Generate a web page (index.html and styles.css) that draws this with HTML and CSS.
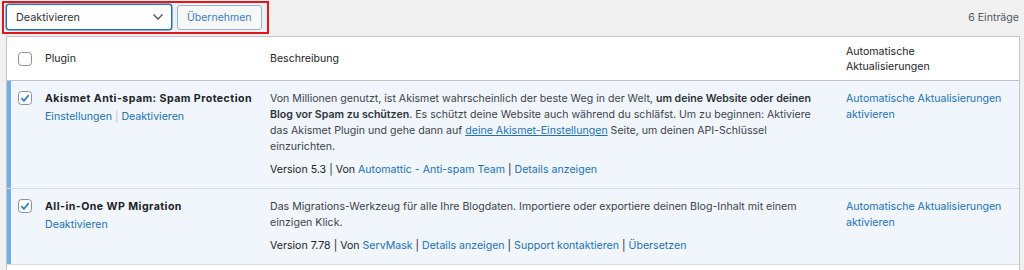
FILE: index.html
```html
<!DOCTYPE html>
<html lang="de">
<head>
    <meta charset="UTF-8">
    <title>Plugins</title>
    <link rel="stylesheet" href="styles.css">
</head>
<body>

    <div class="tablenav">
        <!-- Bulk actions, highlighted -->
        <div class="bulkactions">
            <span class="select-wrap">
                <select class="action-select">
                    <option>Deaktivieren</option>
                </select>
                <svg class="chevron" width="12" height="8" viewBox="0 0 12 8"><path d="M1.5 1.5l4.5 4.5 4.5-4.5" fill="none" stroke="#50575e" stroke-width="1.4"/></svg>
            </span>
            <button class="button" type="button">Übernehmen</button>
        </div>
        <div class="displaying-num">6 Einträge</div>
    </div>

    <table class="plugins">
        <colgroup>
            <col class="col-cb">
            <col class="col-name">
            <col class="col-desc">
            <col class="col-auto">
        </colgroup>
        <thead>
            <tr>
                <th class="check-column"><span class="cb"></span></th>
                <th>Plugin</th>
                <th>Beschreibung</th>
                <th>Automatische<br>Aktualisierungen</th>
            </tr>
        </thead>
        <tbody>
            <tr class="active">
                <th class="check-column"><span class="cb checked"><svg width="12" height="12" viewBox="0 0 12 12"><path d="M2.4 6.2l2.5 2.6 4.8-5.6" fill="none" stroke="#3582c4" stroke-width="1.8"/></svg></span></th>
                <td>
                    <strong class="plugin-title">Akismet Anti-spam: Spam Protection</strong>
                    <div class="row-actions"><a href="#">Einstellungen</a> <span class="sep">|</span> <a href="#">Deaktivieren</a></div>
                </td>
                <td>
                    <p class="plugin-description">Von Millionen genutzt, ist Akismet wahrscheinlich der beste Weg in der Welt, <strong>um deine Website oder deinen Blog vor Spam zu schützen</strong>. Es schützt deine Website auch während du schläfst. Um zu beginnen: Aktiviere das Akismet Plugin und gehe dann auf <a class="underline" href="#">deine Akismet-Einstellungen</a> Seite, um deinen API-Schlüssel einzurichten.</p>
                    <p class="version">Version 5.3 | Von <a href="#">Automattic - Anti-spam Team</a> | <a href="#">Details anzeigen</a></p>
                </td>
                <td><a href="#">Automatische Aktualisierungen aktivieren</a></td>
            </tr>
            <tr class="active">
                <th class="check-column"><span class="cb checked"><svg width="12" height="12" viewBox="0 0 12 12"><path d="M2.4 6.2l2.5 2.6 4.8-5.6" fill="none" stroke="#3582c4" stroke-width="1.8"/></svg></span></th>
                <td>
                    <strong class="plugin-title">All-in-One WP Migration</strong>
                    <div class="row-actions"><a href="#">Deaktivieren</a></div>
                </td>
                <td>
                    <p class="plugin-description">Das Migrations-Werkzeug für alle Ihre Blogdaten. Importiere oder exportiere deinen Blog-Inhalt mit einem einzigen Klick.</p>
                    <p class="version">Version 7.78 | Von <a href="#">ServMask</a> | <a href="#">Details anzeigen</a> | <a href="#">Support kontaktieren</a> | <a href="#">Übersetzen</a></p>
                </td>
                <td><a href="#">Automatische Aktualisierungen aktivieren</a></td>
            </tr>
            <tr class="inactive">
                <th class="check-column"><span class="cb"></span></th>
                <td></td>
                <td></td>
                <td></td>
            </tr>
        </tbody>
    </table>

</body>
</html>
```

FILE: styles.css
```css
body {
    margin: 0;
    padding: 1px 4px 0 2px;
    background-color: #f0f0f1;
    font-family: Inter, "Noto Sans", sans-serif;
    font-size: 10.6px;
    line-height: 16px;
    color: #3c434a;
}
a {
    color: #2271b1;
    text-decoration: none;
}
a.underline {
    text-decoration: underline;
}

/* Top bar */
.tablenav {
    display: flex;
    justify-content: space-between;
    align-items: center;
    margin-bottom: 2px;
}
.bulkactions {
    display: flex;
    align-items: center;
    gap: 5px;
    border: 2px solid #e3161c;
    padding: 1px 5px 2px 2px;
}
.select-wrap {
    position: relative;
    display: flex;
}
.action-select {
    appearance: none;
    -webkit-appearance: none;
    width: 166px;
    height: 26px;
    margin: 0;
    padding: 0 24px 0 9px;
    border: 1px solid #2271b1;
    border-radius: 3px;
    box-shadow: 0 0 0 0.5px #2271b1;
    background-color: #fff;
    font-family: inherit;
    font-size: 10.8px;
    color: #2c3338;
}
.chevron {
    position: absolute;
    right: 8px;
    top: 9px;
}
.button {
    height: 25px;
    margin: 0;
    padding: 0 9px;
    border: 1px solid #8fb5d9;
    border-radius: 3px;
    background-color: #f6f7f7;
    font-family: inherit;
    font-size: 10.5px;
    color: #3a80bd;
}
.displaying-num {
    color: #50575e;
    padding: 1px 1px 0 0;
}

/* Table */
.plugins {
    width: calc(100% - 4px);
    margin-left: 4px;
    table-layout: fixed;
    border-collapse: separate;
    border-spacing: 0;
    border: 1px solid #c3c4c7;
    background-color: #fff;
}
.col-cb { width: 30px; }
.col-name { width: 225px; }
.col-desc { width: 576px; }
th, td {
    text-align: left;
    vertical-align: top;
    font-weight: 400;
    padding: 10px 8px;
    border-bottom: 1px solid #dcdcde;
}
thead th {
    padding: 6.5px 8px;
    line-height: 15px;
    color: #1d2327;
    vertical-align: middle;
    border-bottom: 1px solid #c3c4c7;
}
.check-column {
    padding: 10px 0 0 11px;
}
thead .check-column {
    padding: 0 0 0 11px;
}
tr.active th, tr.active td {
    background-color: #f0f6fc;
}
tr.active .check-column {
    box-shadow: inset 4px 0 0 #72aee6;
}
.cb {
    display: flex;
    align-items: center;
    justify-content: center;
    width: 14px;
    height: 14px;
    box-sizing: border-box;
    border: 1px solid #8c8f94;
    border-radius: 3.5px;
    background-color: #fff;
}
.plugin-title {
    font-weight: 700;
    letter-spacing: 0.45px;
    color: #1d2327;
}
.row-actions {
    padding-top: 2px;
    color: #a7aaad;
}
.row-actions .sep {
    color: #c3c4c7;
}
p {
    margin: 0;
}
.plugin-description {
    max-width: 548px;
    margin-bottom: 7px;
}
.plugin-description strong {
    font-weight: 600;
    color: #2c3338;
}
.version {
    color: #1d2327;
}
```
